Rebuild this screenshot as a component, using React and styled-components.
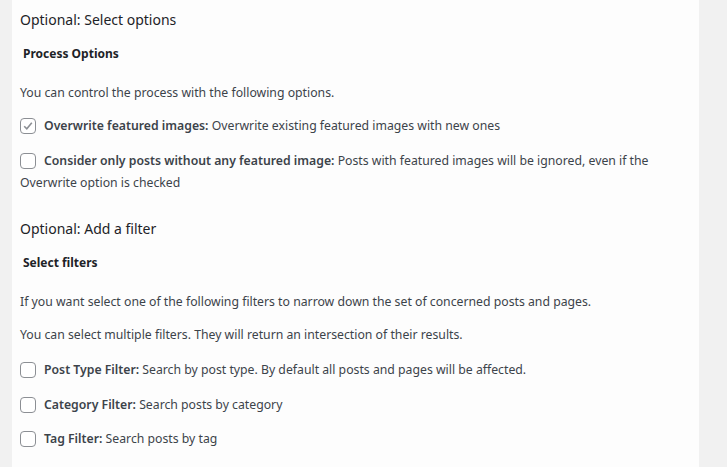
import React from "react";
import styled, { createGlobalStyle } from "styled-components";

const GlobalStyle = createGlobalStyle`
  html, body {
    margin: 0;
    padding: 0;
    background: #f1f1f1;
  }
  body {
    font-family: "Noto Sans", "Open Sans", sans-serif;
    font-size: 13px;
    color: #3c434a;
  }
`;

const Page = styled.div`
  display: flex;
  padding-left: 12px;
  padding-right: 28px;
  height: 467px;
  overflow: hidden;
`;

const Panel = styled.div`
  flex: 1;
  background: #fdfdfd;
  padding: 9px 8px 0 8px;
`;

const Heading = styled.h2`
  margin: 0;
  font-size: 14px;
  font-weight: 400;
  color: #1d2327;
  line-height: 22px;
  margin-top: ${(p) => p.$top || 0}px;
`;

const SubHeading = styled.h3`
  margin: 0;
  font-size: 12px;
  font-weight: 700;
  color: #1d2327;
  padding-left: 3px;
  line-height: 20px;
  margin-top: ${(p) => p.$top}px;
`;

const Text = styled.p`
  margin: 0;
  font-size: 12.25px;
  line-height: 22px;
  margin-top: ${(p) => p.$top}px;
`;

const Option = styled.label`
  display: block;
  font-size: 12.25px;
  line-height: 22px;
  margin-top: ${(p) => p.$top}px;
`;

const Box = styled.span`
  display: inline-block;
  box-sizing: border-box;
  width: 16px;
  height: 16px;
  border: 1px solid #8c8f94;
  border-radius: 4px;
  background: #fff;
  vertical-align: -4px;
  margin-right: 8px;
  position: relative;
`;

const Check = styled.svg`
  position: absolute;
  left: 1px;
  top: 1px;
`;

const Label = styled.strong`
  font-weight: 600;
  color: #3c434a;
`;

function Checkbox({ checked, label, text, top }) {
  return (
    <Option $top={top}>
      <Box>
        {checked && (
          <Check width="12" height="12" viewBox="0 0 12 12">
            <path d="M2.2 6.2 L4.8 8.8 L9.8 2.8" fill="none" stroke="#8c8f94" strokeWidth="1.6" />
          </Check>
        )}
      </Box>
      <Label>{label}</Label> {text}
    </Option>
  );
}

export default function App() {
  return (
    <>
      <GlobalStyle />
      <Page>
        <Panel>
          <Heading>Optional: Select options</Heading>
          <SubHeading $top={13}>Process Options</SubHeading>
          <Text $top={18}>You can control the process with the following options.</Text>
          <Checkbox
            top={11}
            checked
            label="Overwrite featured images:"
            text="Overwrite existing featured images with new ones"
          />
          <Checkbox
            top={13}
            label="Consider only posts without any featured image:"
            text="Posts with featured images will be ignored, even if the Overwrite option is checked"
          />
          <Heading $top={24}>Optional: Add a filter</Heading>
          <SubHeading $top={13}>Select filters</SubHeading>
          <Text $top={18}>
            If you want select one of the following filters to narrow down the set of concerned posts and pages.
          </Text>
          <Text $top={11}>You can select multiple filters. They will return an intersection of their results.</Text>
          <Checkbox
            top={13}
            label="Post Type Filter:"
            text="Search by post type. By default all posts and pages will be affected."
          />
          <Checkbox top={13} label="Category Filter:" text="Search posts by category" />
          <Checkbox top={12} label="Tag Filter:" text="Search posts by tag" />
        </Panel>
      </Page>
    </>
  );
}
